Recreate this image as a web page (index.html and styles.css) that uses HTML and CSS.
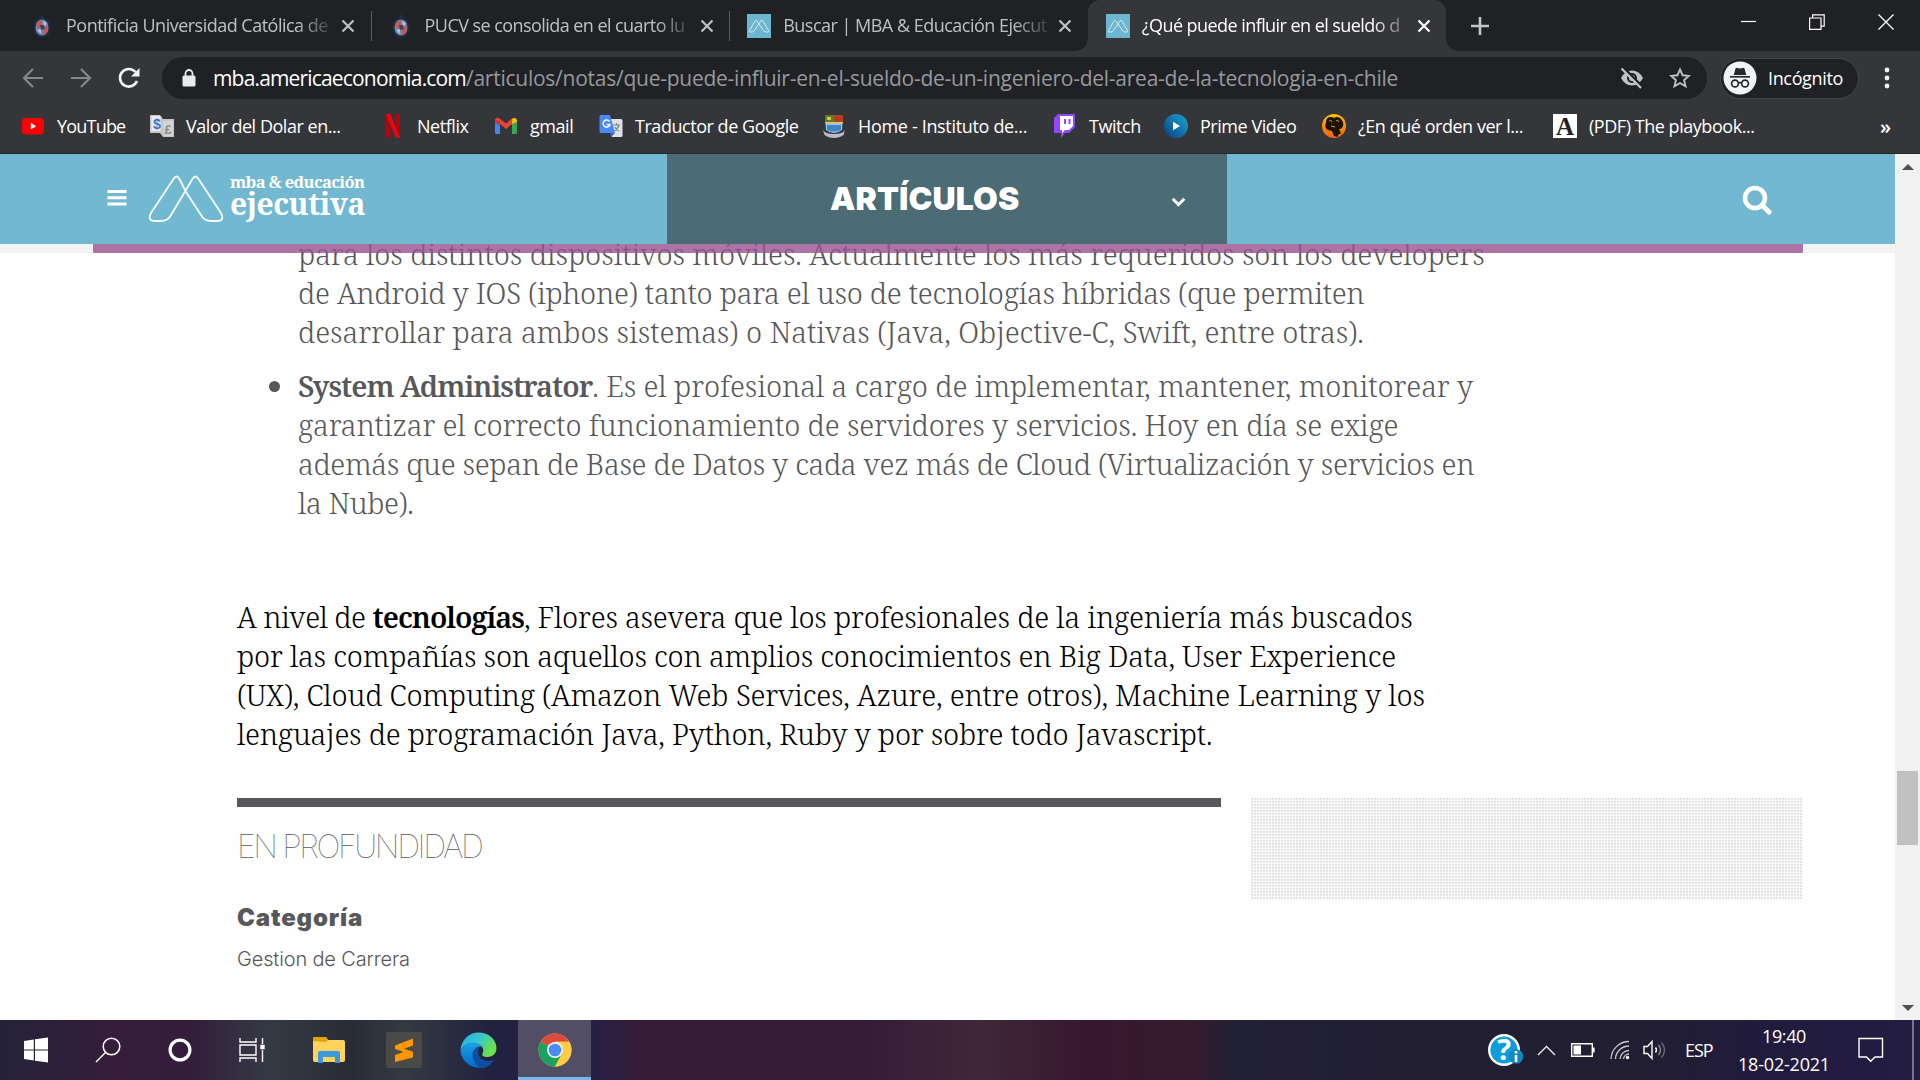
FILE: index.html
```html
<!DOCTYPE html>
<html lang="es">
<head>
<meta charset="utf-8">
<title>¿Qué puede influir en el sueldo de un ingeniero?</title>
<link rel="stylesheet" href="styles.css">
</head>
<body>
<svg class="defs" width="0" height="0">
  <symbol id="crest" viewBox="0 0 24 24"><path d="M12 0l2 4h-4z" fill="#1d3350"/><ellipse cx="12" cy="13.500" rx="9" ry="10.500" fill="#1b2c44"/><ellipse cx="12" cy="13.500" rx="6.500" ry="8" fill="#7389aa"/><path d="M6 10l5-4 2 6-5 3zM13 14l5-3-1 8-4 2z" fill="#c9574e"/><path d="M13 7l4 2-3 4zM7 16l4-1 0 5z" fill="#b4c1d8"/><path d="M10 11l4 0 1 4-4 1z" fill="#31486c"/></symbol>
  <symbol id="mba" viewBox="0 0 24 24"><rect width="24" height="24" fill="#6cb6d0"/><path d="M12 10L9.800 6.800Q9 5.800 8.200 6.800L2.500 16.500Q2 18 3.500 18H5Q6.500 18 7.200 16.800L14 6.800Q15 5.800 15.800 6.800L21.500 16.500Q22 18 20.500 18H19Q17.500 18 16.800 16.800Z" fill="none" stroke="#d6edf4" stroke-width="1"/></symbol>
  <symbol id="x" viewBox="0 0 14 14"><path d="M1.500 1.500l11 11M12.500 1.500l-11 11" stroke="currentColor" stroke-width="2.200"/></symbol>
</svg>

<header class="browser">
  <div class="tabstrip">
    <div class="tab"><svg class="fav"><use href="#crest"/></svg><span class="title">Pontificia Universidad Católica de</span><svg class="close"><use href="#x"/></svg></div>
    <div class="tab"><svg class="fav"><use href="#crest"/></svg><span class="title t2">PUCV se consolida en el cuarto lu</span><svg class="close"><use href="#x"/></svg></div>
    <div class="tab"><svg class="fav"><use href="#mba"/></svg><span class="title">Buscar | MBA &amp; Educación Ejecut</span><svg class="close"><use href="#x"/></svg></div>
    <div class="tab active"><svg class="fav"><use href="#mba"/></svg><span class="title t4">¿Qué puede influir en el sueldo d</span><svg class="close"><use href="#x"/></svg></div>
    <svg class="plus" width="18" height="18" viewBox="0 0 18 18"><path d="M9 0v18M0 9h18" stroke="#c3c5c8" stroke-width="2.600"/></svg>
    <div class="winctl">
      <svg width="16" height="16" viewBox="0 0 16 16"><path d="M0 7.500h15" stroke="#fff" stroke-width="1.200"/></svg>
      <svg width="16" height="16" viewBox="0 0 16 16" fill="none" stroke="#fff" stroke-width="1.200"><path d="M.6 4h11.400v11.400H.6zM3.600 4V.8h11.600v11.400H12"/></svg>
      <svg width="16" height="16" viewBox="0 0 16 16"><path d="M.5 .5l15 15M15.500 .5l-15 15" stroke="#fff" stroke-width="1.300"/></svg>
    </div>
  </div>

  <div class="toolbar">
    <svg class="nav" width="22" height="20" viewBox="0 0 22 20"><path d="M21 10H2M11 1L2 10l9 9" fill="none" stroke="#85878a" stroke-width="2.200"/></svg>
    <svg class="nav" width="22" height="20" viewBox="0 0 22 20"><path d="M1 10h19M11 1l9 9-9 9" fill="none" stroke="#85878a" stroke-width="2.200"/></svg>
    <svg class="nav reload" width="22" height="22" viewBox="0 0 22 22"><path d="M19 14A8.800 8.800 0 1 1 17.500 5" fill="none" stroke="#f1f3f4" stroke-width="2.600"/><path d="M21.500 1v8.500H13z" fill="#f1f3f4"/></svg>
    <div class="omnibox">
      <svg width="14" height="18" viewBox="0 0 14 18"><path d="M3.500 8V4.500a3.500 3.500 0 0 1 7 0V8" fill="none" stroke="#e8eaed" stroke-width="1.800"/><rect x=".5" y="6.500" width="13" height="11" rx="1.500" fill="#e8eaed"/></svg>
      <div class="url"><span class="host">mba.americaeconomia.com</span><span class="path">/articulos/notas/que-puede-influir-en-el-sueldo-de-un-ingeniero-del-area-de-la-tecnologia-en-chile</span></div>
      <svg class="eye" width="24" height="22" viewBox="0 0 24 22"><path d="M1 11Q5 3.500 12 3.500T23 11Q19 18.500 12 18.500T1 11Z" fill="#c0c2c5"/><circle cx="12" cy="11" r="5" fill="#202124"/><circle cx="12" cy="11" r="3" fill="#c0c2c5"/><path d="M2.500 0l20 20" stroke="#202124" stroke-width="3"/><path d="M1.500 1.500l19.500 19.500" stroke="#c0c2c5" stroke-width="2.300"/></svg>
      <svg width="22" height="22" viewBox="0 0 22 22"><path d="M11 2.500l2.600 5.800 6.300.6-4.800 4.200 1.400 6.200L11 16l-5.500 3.300 1.400-6.200-4.800-4.200 6.300-.6z" fill="none" stroke="#c0c2c5" stroke-width="1.900"/></svg>
    </div>
    <div class="incognito">
      <svg width="34" height="34" viewBox="0 0 34 34"><circle cx="17" cy="17" r="16.500" fill="#f1f3f4"/><path d="M12.500 7.500q.5-1 1.500-.6l3 .7 3-.7q1-.4 1.500.6L23.300 14H10.700z" fill="#26282b"/><path d="M7 15.800h20" stroke="#26282b" stroke-width="1.700"/><g fill="none" stroke="#26282b" stroke-width="1.700"><circle cx="12" cy="22.500" r="3.400"/><circle cx="22" cy="22.500" r="3.400"/><path d="M15.400 22q1.600-1 3.200 0"/></g></svg>
      <span>Incógnito</span>
    </div>
    <svg class="dots" width="6" height="22" viewBox="0 0 6 22" fill="#f1f3f4"><circle cx="3" cy="3" r="2.400"/><circle cx="3" cy="11" r="2.400"/><circle cx="3" cy="19" r="2.400"/></svg>
  </div>

  <nav class="bookmarks">
    <a class="tight"><svg viewBox="0 0 24 24"><rect x="1" y="4" width="22" height="16.500" rx="4" fill="#f00"/><path d="M9.800 8.800l5.400 3.400-5.400 3.400z" fill="#fff"/></svg>YouTube</a>
    <a><svg viewBox="0 0 24 24"><path d="M0 1h10l3 4h11v18H13l-3-4H0z" fill="#c5c6c8"/><path d="M1.500 2h9v15h-9z" fill="#e9edf2"/><path d="M13 7h10v15H14z" fill="#d4d4d4"/><text x="3" y="15" font-size="14" font-weight="700" fill="#2d7ad1">$</text><text x="14.500" y="20" font-size="13" font-weight="700" fill="#8b8b8b">£</text></svg>Valor del Dolar en...</a>
    <a><svg viewBox="0 0 24 24"><path d="M5 0h4.500v24L5 23.500zM14.500 0H19v23.500l-4.500.5z" fill="#b1060f"/><path d="M5 0h4.500L19 24l-4.500-.7z" fill="#e50914"/></svg>Netflix</a>
    <a><svg viewBox="0 0 24 24"><path d="M1 6v12.500Q1 20 2.500 20H6V10z" fill="#4285f4"/><path d="M18 10v10h3.500q1.500 0 1.500-1.500V6z" fill="#34a853"/><path d="M1 7v-.5C1 4 3.500 3 5.500 4.500L12 9.500l6-5V10l-6 5-6-5-5-3z" fill="#ea4335"/><path d="M18 10V4.700C20.500 3 23 4.500 23 6.500V8z" fill="#fbbc04"/><path d="M1 6.500v2L6 12V7z" fill="#c5221f" opacity=".5"/></svg>gmail</a>
    <a><svg viewBox="0 0 24 24"><path d="M9 5h13q1.500 0 1.500 1.500v15q0 1.500-1.500 1.500H13z" fill="#dfe1e5"/><path d="M14 11h7M17.500 9v2M20 11q-1 4-5 6M16 13q1 3 4 4" stroke="#7a8794" stroke-width="1.200" fill="none"/><path d="M2 1h9l5 18H2Q.5 19 .5 17.500v-15Q.5 1 2 1z" fill="#4a8af4"/><path d="M11 19h5l-4 4z" fill="#3b5fc7"/><path d="M10.500 7.500A3.500 3.500 0 1 0 11 10.500H7.500" fill="none" stroke="#fff" stroke-width="1.500"/></svg>Traductor de Google</a>
    <a class="loose"><svg viewBox="0 0 24 24"><path d="M3 1h18l-1 15q-8 6-16 0z" fill="#9cc6e8"/><path d="M3 1h9v7H3z" fill="#5d7b2c"/><path d="M12 1h9v7h-9z" fill="#a9441f"/><path d="M5 3h4v3H5z" fill="#e2c53b"/><path d="M15 3h4v3h-4z" fill="#d82a20"/><path d="M3 8h18v1.500H3z" fill="#e4c35c"/><path d="M5 11h14v5q-7 3-14 0z" fill="#3f86c9"/><path d="M1 16q2 4 11 4t11-4l-1.500 5q-4 3-9.500 3t-9.500-3z" fill="#b9bbcf"/></svg>Home - Instituto de...</a>
    <a><svg viewBox="0 0 24 24"><path d="M5 0h17v13l-6 6h-4l-4 5v-5H1V4z" fill="#9146ff"/><path d="M7 2h13v10l-4 4h-4l-3 3v-3H7z" fill="#fff"/><path d="M12 5v5M16.500 5v5" stroke="#9146ff" stroke-width="2"/></svg>Twitch</a>
    <a><svg viewBox="0 0 24 24"><defs><linearGradient id="pv" x1="0" y1="1" x2="1" y2="0"><stop stop-color="#0b3f82"/><stop offset="1" stop-color="#1ba6d6"/></linearGradient></defs><circle cx="12" cy="12" r="12" fill="url(#pv)"/><path d="M9 7.800l7 4.200-7 4.200z" fill="#fff"/></svg>Prime Video</a>
    <a><svg viewBox="0 0 24 24"><defs><linearGradient id="or" x1="0" y1="0" x2="0" y2="1"><stop stop-color="#ffc400"/><stop offset="1" stop-color="#f0600a"/></linearGradient></defs><circle cx="12" cy="12" r="12" fill="url(#or)"/><path d="M4 8q0-5 5-5 3 0 3 1.500Q14 2 18 4q4 3 3 8-1 3-4 3l2 4-3 2 0 2-4-1-2-5-4-1q-4-2-2-8z" fill="#1c1205"/><path d="M7 7q2-2 3 1M14 7q2-2 3 1M9 12l4 1" stroke="#e8930c" stroke-width="1" fill="none"/></svg>¿En qué orden ver l...</a>
    <a><svg viewBox="0 0 24 24"><rect width="24" height="24" fill="#fff"/><text class="serif-a" x="12" y="20.500" text-anchor="middle">A</text></svg>(PDF) The playbook...</a>
    <span class="more">»</span>
  </nav>
</header>

<main class="viewport">
  <div class="page">
    <div class="masthead">
      <div class="brand">
        <svg width="20" height="16" viewBox="0 0 20 16"><path d="M.5 1.500h19M.5 7.800h19M.5 14h19" stroke="#fff" stroke-width="3"/></svg>
        <svg class="logo" width="76" height="47" viewBox="0 0 76 47"><path d="M38 17L31.500 4Q28.500 -1 25.500 4L3 38Q-1 46 7 46H13Q20 46 23 40L44.500 4Q47.500 -1 50.500 4L73 38Q77 46 69 46H63Q56 46 53 40Z" fill="none" stroke="#f3fafc" stroke-width="1.800"/></svg>
        <div class="wordmark"><span class="small">mba &amp; educación</span><span class="big">ejecutiva</span></div>
      </div>
      <div class="section">
        <h1>ARTÍCULOS</h1>
        <svg class="chev" width="15" height="10" viewBox="0 0 15 10"><path d="M1.700 1.700l5.800 6 5.800-6" fill="none" stroke="#fff" stroke-width="3"/></svg>
      </div>
      <div class="search"><svg width="30" height="30" viewBox="0 0 30 30"><circle cx="13" cy="13" r="10" fill="none" stroke="#fff" stroke-width="4.600"/><path d="M20 20l7 7" stroke="#fff" stroke-width="5" stroke-linecap="round"/></svg></div>
    </div>
    <div class="progress"><div class="bar"></div></div>

    <article class="article">
      <ul>
        <li class="plain">
          <span class="line a1">para los distintos dispositivos móviles. Actualmente los más requeridos son los developers</span>
          <span class="line a2">de Android y IOS (iphone) tanto para el uso de tecnologías híbridas (que permiten</span>
          <span class="line a3">desarrollar para ambos sistemas) o Nativas (Java, Objective-C, Swift, entre otras).</span>
        </li>
        <li>
          <span class="line b1"><strong>System Administrator</strong>. Es el profesional a cargo de implementar, mantener, monitorear y</span>
          <span class="line b2">garantizar el correcto funcionamiento de servidores y servicios. Hoy en día se exige</span>
          <span class="line b3">además que sepan de Base de Datos y cada vez más de Cloud (Virtualización y servicios en</span>
          <span class="line b4">la Nube).</span>
        </li>
      </ul>
      <p>
        <span class="line c1"><span class="lead">A nivel de </span><strong>tecnologías</strong>, Flores asevera que los profesionales de la ingeniería más buscados</span>
        <span class="line c2">por las compañías son aquellos con amplios conocimientos en Big Data, User Experience</span>
        <span class="line c3">(UX), Cloud Computing (Amazon Web Services, Azure, entre otros), Machine Learning y los</span>
        <span class="line c4">lenguajes de programación Java, Python, Ruby y por sobre todo Javascript.</span>
      </p>
    </article>

    <div class="below">
      <section class="depth">
        <h2>EN PROFUNDIDAD</h2>
        <h3>Categoría</h3>
        <a>Gestion de Carrera</a>
      </section>
      <aside class="ad"></aside>
    </div>
  </div>
  <div class="scrollbar">
    <svg width="12" height="6" viewBox="0 0 12 6"><path d="M6 0l6 6H0z" fill="#505050"/></svg>
    <div class="thumb"></div>
    <svg width="12" height="6" viewBox="0 0 12 6"><path d="M0 0h12L6 6z" fill="#505050"/></svg>
  </div>
</main>

<footer class="taskbar">
  <div class="app"><svg width="26" height="26" viewBox="0 0 26 26" fill="#fff"><path d="M1 4l9.800-1.600v10H1zM12 2.200L25 .5v11.900H12zM1 13.600h9.800v10L1 22zM12 13.600h13v11.900L12 23.800z"/></svg></div>
  <div class="app"><svg width="26" height="26" viewBox="0 0 26 26" fill="none" stroke="#fff" stroke-width="1.500"><circle cx="16.500" cy="9.500" r="8.300"/><path d="M10.500 15.500L1 25"/></svg></div>
  <div class="app"><svg width="26" height="26" viewBox="0 0 26 26"><circle cx="13" cy="13" r="9.900" fill="none" stroke="#fff" stroke-width="3.200"/></svg></div>
  <div class="app"><svg width="26" height="26" viewBox="0 0 26 26" fill="none" stroke="#fff" stroke-width="1.400"><path d="M1 1v4h16V1M1 25v-4h16v4M1 8h16v10H1zM23.500 1v6M23.500 13v12"/><path d="M22 8.500h3v3h-3z" fill="#fff"/></svg></div>
  <div class="app"><svg width="34" height="30" viewBox="0 0 34 30"><path d="M1 4q0-2 2-2h11l2 3H31q2 0 2 2v18q0 2-2 2H3q-2 0-2-2z" fill="#ffd35c"/><path d="M1 6V4q0-2 2-2h11l2 3-2 2z" fill="#e0a30e"/><path d="M6 28V18q0-2 2-2h18q2 0 2 2v10h-5v-6H11v6z" fill="#3b97e0"/></svg></div>
  <div class="app"><svg width="36" height="36" viewBox="0 0 36 36"><rect width="36" height="36" rx="2" fill="#4a4a48"/><path d="M9 13.500L27 6.500v7l-9 3.300 9 3v5.700L9 30v-7l8.500-3L9 17z" fill="#ff9800"/></svg></div>
  <div class="app"><svg width="37" height="37" viewBox="0 0 37 37"><defs><linearGradient id="e1" x1="0" y1="0" x2="1" y2=".5"><stop stop-color="#25a9e8"/><stop offset=".5" stop-color="#37c6cf"/><stop offset="1" stop-color="#6be34a"/></linearGradient><linearGradient id="e2" x1="0" y1="0" x2="0" y2="1"><stop stop-color="#1ba0ea"/><stop offset="1" stop-color="#0567c8"/></linearGradient></defs><path d="M.5 18.500C1 8 9 .5 18.500 .5 29 .5 36.500 8 36.500 16c0 6-4.500 9-9 9-4 0-6-1.500-5-3.500 1-2 1-4 0-6C19 9 5 9 .5 18.500z" fill="url(#e1)"/><path d="M.5 18.500C4 9 18 8 22.500 15c-4-2-9 2-9 7.500 0 7 6 12 13 11.500A18.300 18.300 0 0 1 .5 18.500z" fill="url(#e2)"/><path d="M18 15c-5 2-6.500 7-5 11.500C15 33 20 36.500 24 36c5-1.500 8-4.500 10-8.500-6 3-14 1-15.500-5-.6-3 .5-5-.5-7.500z" fill="#0c4f9e"/></svg></div>
  <div class="app current"><svg width="34" height="34" viewBox="0 0 34 34"><circle cx="17" cy="17" r="16.500" fill="#ffce44"/><path d="M17 17L2.700 8.800A16.500 16.500 0 0 1 31.300 8.800H17z" fill="#dd4b3e"/><path d="M17 17L2.700 8.800A16.500 16.500 0 0 0 17 33.500L24 21z" fill="#1aa260"/><path d="M17 8.800h14.300A16.500 16.500 0 0 1 17 33.500L24 21z" fill="#ffce44"/><circle cx="17" cy="17" r="8" fill="#f1f1f1"/><circle cx="17" cy="17" r="6.300" fill="#4a8af4"/></svg></div>

  <div class="tray">
    <svg class="help" width="36" height="34" viewBox="0 0 36 34"><circle cx="16" cy="17" r="14.800" fill="#0d9ddb" stroke="#fff" stroke-width="2.400"/><text x="16" y="27" text-anchor="middle" class="q">?</text><circle cx="28" cy="23.500" r="7.300" fill="#1086c4"/><path d="M28 18v2.400M28 22v7" stroke="#fff" stroke-width="2.600"/></svg>
    <svg class="up" width="19" height="11" viewBox="0 0 19 11"><path d="M1 10l8.500-8.500L18 10" fill="none" stroke="#eee" stroke-width="1.400"/></svg>
    <svg class="bat" width="24" height="14" viewBox="0 0 24 14"><path d="M.7 .7h20.600v12.600H.7z" fill="none" stroke="#fff" stroke-width="1.400"/><path d="M2.500 2.500h7.500v9H2.500zM22 4.500h1.600v5H22z" fill="#fff"/></svg>
    <svg class="wifi" width="20" height="20" viewBox="0 0 20 20"><g fill="none" stroke="#c9c9d0" stroke-width="1.300"><path d="M1 19A18 18 0 0 1 19 1.500"/><path d="M5.500 19A13.500 13.500 0 0 1 19 6"/><path d="M10 19A9 9 0 0 1 19 10.500"/><path d="M13.500 19A5.500 5.500 0 0 1 19 14"/></g><circle cx="17.500" cy="17.500" r="1.700" fill="#fff"/></svg>
    <svg class="vol" width="24" height="20" viewBox="0 0 24 20" fill="none" stroke="#fff" stroke-width="1.400"><path d="M1 6.500h3.500L9 1.500v17L4.500 13.500H1z"/><path d="M12.500 7.500q2 2.500 0 5"/><path d="M15.500 5q4 5 0 10" stroke="#8d8b99"/><path d="M18.500 2.500q6 7.500 0 15" stroke="#6d6b79"/></svg>
    <span class="lang">ESP</span>
    <div class="clock"><span>19:40</span><span class="date">18-02-2021</span></div>
    <svg class="note" width="26" height="26" viewBox="0 0 26 26"><path d="M1 1.500h23.500V20H17l-4.300 4.300L8.500 20H1z" fill="none" stroke="#fff" stroke-width="1.400"/></svg>
    <i class="edge"></i>
  </div>
</footer>
</body>
</html>
```
FILE: styles.css
```css
* { box-sizing: border-box; }
body {
  margin: 0;
  width: 1920px;
  height: 1080px;
  overflow: hidden;
  display: flex;
  flex-direction: column;
  font-family: "Open Sans", "Noto Sans", sans-serif;
  font-size: 18px;
  letter-spacing: -0.46px;
  background: #fff;
}
svg { display: block; flex: none; }
.defs { position: absolute; }

/* Browser chrome */
.browser { height: 154px; flex: none; background: #35363a; border-bottom: 1px solid #26272a; }
.tabstrip { height: 51px; background: #202124; display: flex; align-items: center; padding-left: 12px; }
.tab {
  position: relative;
  width: 358.600px;
  height: 51px;
  padding-left: 18px;
  display: flex;
  align-items: center;
  color: #bdc1c6;
}
.tab .fav { width: 24px; height: 24px; }
.tab .title {
  margin-left: 12px;
  width: 264px;
  height: 30px;
  line-height: 28px;
  white-space: nowrap;
  letter-spacing: -0.51px;
  -webkit-mask-image: linear-gradient(90deg, #000 230px, transparent 272px);
  mask-image: linear-gradient(90deg, #000 230px, transparent 272px);
}
.tab .t2, .tab .t4 { letter-spacing: -0.56px; }
.tab .close { width: 14px; height: 14px; margin-left: 11px; }
.tab:nth-child(-n+2)::after {
  content: "";
  position: absolute;
  right: -1px;
  top: 11px;
  width: 1px;
  height: 30px;
  background: #5b5d61;
}
.tab.active { background: #35363a; color: #fff; border-radius: 12px 12px 0 0; }
.tab.active::before, .tab.active::after {
  content: "";
  position: absolute;
  bottom: 0;
  width: 12px;
  height: 12px;
}
.tab.active::before { left: -12px; background: radial-gradient(circle at 0 0, transparent 11.5px, #35363a 12px); }
.tab.active::after { right: -12px; background: radial-gradient(circle at 100% 0, transparent 11.5px, #35363a 12px); }
.plus { margin-left: 25px; }
.winctl { margin-left: auto; display: flex; gap: 53px; padding-right: 26px; margin-top: -8px; }
.winctl svg:first-child { margin-right: -1px; }

.toolbar { height: 54px; display: flex; align-items: center; padding-left: 22px; }
.nav { margin-right: 26px; }
.nav.reload { margin-right: 22px; }
.omnibox {
  width: 1545px;
  height: 42px;
  border-radius: 21px;
  background: #202124;
  display: flex;
  align-items: center;
  padding: 0 16px 0 20px;
}
.url { margin-left: 17px; font-size: 21px; line-height: 42px; white-space: nowrap; }
.host { color: #fff; letter-spacing: -0.83px; }
.path { color: #96999d; letter-spacing: -0.25px; }
.eye { margin-left: auto; margin-right: 25px; }
.incognito {
  margin-left: 13px;
  width: 139px;
  height: 41px;
  border-radius: 21px;
  border: 1px solid #45464a;
  background: #202124;
  color: #fff;
  display: flex;
  align-items: center;
  padding-left: 2px;
  gap: 11px;
  letter-spacing: -0.35px;
}
.dots { margin-left: 25px; }

.bookmarks {
  height: 48px;
  padding: 0 0 6px 21px;
  display: grid;
  grid-template-columns: 129px 231px 113px 105px 223px 231px 111px 158px 231px 327px auto;
  align-items: center;
  color: #fff;
}
.bookmarks a { display: flex; align-items: center; gap: 12px; white-space: nowrap; }
.bookmarks a.tight { letter-spacing: -0.8px; }
.bookmarks a.loose { letter-spacing: -0.33px; }
.bookmarks a svg { width: 24px; height: 24px; }
.bookmarks .more { font-size: 20px; font-weight: 600; }
.bookmarks text { font-family: "Liberation Sans", sans-serif; letter-spacing: 0; }
.bookmarks .serif-a { font: 700 25px "Liberation Serif", serif; fill: #222; }

/* Page */
.viewport { height: 866px; flex: none; display: flex; }
.page { position: relative; width: 1895px; height: 866px; overflow: hidden; background: #fefefe; color: #58585a; }
.masthead {
  position: absolute;
  z-index: 2;
  left: 0;
  top: 0;
  width: 1895px;
  height: 90px;
  background: #72b8d0;
  display: grid;
  grid-template-columns: 667px 560px 1fr;
  color: #fff;
}
.brand { display: flex; align-items: flex-start; padding: 36px 0 0 107px; }
.logo { margin: -15px 0 0 21px; }
.wordmark { display: flex; flex-direction: column; margin: -20px 0 0 6px; font-family: "Noto Serif", "DejaVu Serif Condensed", serif; font-weight: 700; white-space: nowrap; }
.wordmark .small { font-size: 16.5px; line-height: 23px; letter-spacing: -0.65px; }
.wordmark .big { font-size: 30px; line-height: 22px; letter-spacing: -0.5px; }
.section { background: #4b6b75; display: flex; align-items: center; padding-left: 163px; }
.section h1 { margin: 0; width: 190px; font: 900 32px/90px "Inter", sans-serif; letter-spacing: 0.1px; }
.chev { margin: 5px 0 0 151px; }
.search { padding: 31px 0 0 515px; }
.progress {
  position: absolute;
  z-index: 1;
  left: 0;
  top: 90px;
  width: 1895px;
  height: 9px;
  padding: 0 92px 0 93px;
  background: linear-gradient(90deg, #f3f3f3 93px, transparent 93px, transparent 1803px, #f3f3f3 1803px);
}
.progress .bar { height: 9px; background: rgba(152, 82, 144, 0.8); }

.article {
  padding: 80px 0 0 237px;
  font: 300 29px/39px "Noto Serif", "DejaVu Serif Condensed", serif;
}
.article ul { margin: 0; padding: 0 0 0 61px; list-style: none; display: grid; gap: 15px; }
.article li { position: relative; }
.article li:not(.plain)::before {
  content: "";
  position: absolute;
  left: -29px;
  top: 15px;
  width: 11px;
  height: 11px;
  border-radius: 50%;
  background: #58585a;
}
.article p { margin: 75px 0 0; color: #000; }
.article strong { font-weight: 600; letter-spacing: -1px; }
.line { display: block; height: 39px; white-space: nowrap; }
.a1 { letter-spacing: -0.08px; }
.a2 { letter-spacing: -0.26px; }
.a3 { letter-spacing: -0.01px; }
.b1 { letter-spacing: -0.07px; }
.b2 { letter-spacing: -0.12px; }
.b3 { letter-spacing: -0.3px; }
.b4 { letter-spacing: -0.38px; }
.c1 { letter-spacing: -0.18px; }
.c1 .lead { letter-spacing: -0.5px; }
.c2 { letter-spacing: -0.19px; }
.c3 { letter-spacing: -0.17px; }
.c4 { letter-spacing: -0.21px; }

.below { display: grid; grid-template-columns: 984px 551px; gap: 30px; margin: 45px 0 0 237px; }
.depth { border-top: 9px solid #58585a; font-family: "Inter", sans-serif; }
.depth h2 { margin: 20px 0 0; font: 100 32px/40px "Inter", sans-serif; letter-spacing: -2.4px; }
.depth h3 { margin: 36px 0 0; font: 900 24px/30px "Inter", sans-serif; letter-spacing: 0.85px; }
.depth a { display: block; margin-top: 13px; font-size: 20px; font-weight: 300; line-height: 26px; letter-spacing: -0.15px; }
.ad {
  height: 102px;
  background:
    repeating-linear-gradient(90deg, rgba(255, 255, 255, 0) 0 2px, #fafafa 2px 3px),
    repeating-linear-gradient(180deg, #dfdfdf 0 1px, #e9e9e9 1px 2px, #fafafa 2px 3px);
}

.scrollbar { width: 25px; background: #f1f1f1; display: flex; flex-direction: column; align-items: center; padding: 10px 0 9px; }
.thumb { width: 21px; height: 74px; margin: 601px 0 auto; background: #c1c1c1; }

/* Taskbar */
.taskbar {
  height: 60px;
  flex: none;
  display: flex;
  color: #fff;
  background: linear-gradient(90deg, #242338 0, #351d3b 110px, #341d3b 190px, #343a44 270px, #292c37 350px, #333a42 405px, #22223f 490px, #261f45 590px, #371c38 640px, #371c38 870px, #402739 980px, #371730 1085px, #371b2e 1190px, #222034 1235px, #211e32 1640px, #211b3e 1780px, #241d42 1920px);
}
.app { width: 72px; display: flex; align-items: center; justify-content: center; }
.app:nth-child(n+5) { width: 75px; }
.app:nth-child(5) { margin-left: 3px; }
.app.current { width: 73px; margin-left: 2px; background: #524e66; border-bottom: 3px solid #76b9ed; padding-top: 3px; }
.app:nth-child(8) { width: 73px; }
.tray { margin-left: auto; display: flex; align-items: center; height: 60px; }
.help .q { font: 700 29px "Open Sans", sans-serif; fill: #fff; }
.up { margin-left: 13px; }
.bat { margin-left: 15px; }
.wifi { margin-left: 15px; }
.vol { margin-left: 13px; }
.lang { margin-left: 18px; width: 28px; letter-spacing: -1px; }
.clock { margin-left: 25px; width: 92px; display: flex; flex-direction: column; align-items: center; line-height: 28px; letter-spacing: -0.4px; }
.clock .date { letter-spacing: -0.2px; }
.note { margin: 0 0 0 28px; }
.edge { width: 2px; height: 60px; margin: 0 6px 0 28px; background: #77758a; }
```
